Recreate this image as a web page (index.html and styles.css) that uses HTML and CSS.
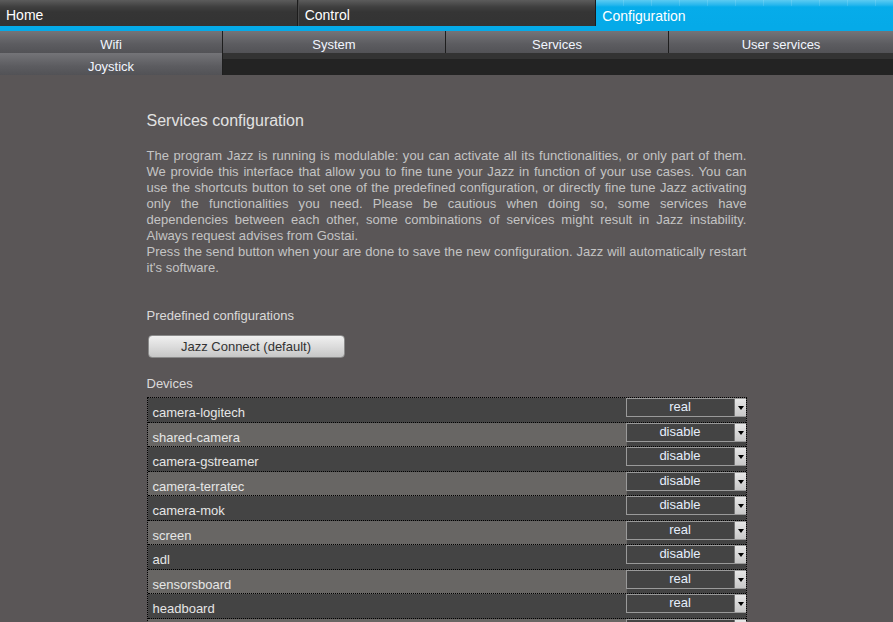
FILE: index.html
```html
<!DOCTYPE html>
<html>
<head>
<meta charset="utf-8">
<link rel="stylesheet" href="styles.css">
</head>
<body>
<div class="topnav">
  <div class="tab">Home</div>
  <div class="tab">Control</div>
  <div class="tab active">Configuration</div>
</div>
<div class="subnav">
  <div class="subrow">
    <div class="stab">Wifi</div>
    <div class="stab">System</div>
    <div class="stab">Services</div>
    <div class="stab">User services</div>
  </div>
  <div class="subrow second">
    <div class="stab">Joystick</div>
  </div>
</div>
<div class="content">
  <h1 class="title">Services configuration</h1>
  <p class="intro">The program Jazz is running is modulable: you can activate all its functionalities, or only part of them. We provide this interface that allow you to fine tune your Jazz in function of your use cases. You can use the shortcuts button to set one of the predefined configuration, or directly fine tune Jazz activating only the functionalities you need. Please be cautious when doing so, some services have dependencies between each other, some combinations of services might result in Jazz instability. Always request advises from Gostai.<br>Press the send button when your are done to save the new configuration. Jazz will automatically restart it's software.</p>
  <div class="label predef">Predefined configurations</div>
  <button class="btn">Jazz Connect (default)</button>
  <div class="label devices">Devices</div>
  <div class="table">
    <div class="row"><span class="name">camera-logitech</span><div class="sel"><span class="val">real</span><span class="arrow"></span></div></div>
    <div class="row light"><span class="name">shared-camera</span><div class="sel"><span class="val">disable</span><span class="arrow"></span></div></div>
    <div class="row"><span class="name">camera-gstreamer</span><div class="sel"><span class="val">disable</span><span class="arrow"></span></div></div>
    <div class="row light"><span class="name">camera-terratec</span><div class="sel"><span class="val">disable</span><span class="arrow"></span></div></div>
    <div class="row"><span class="name">camera-mok</span><div class="sel"><span class="val">disable</span><span class="arrow"></span></div></div>
    <div class="row light"><span class="name">screen</span><div class="sel"><span class="val">real</span><span class="arrow"></span></div></div>
    <div class="row"><span class="name">adl</span><div class="sel"><span class="val">disable</span><span class="arrow"></span></div></div>
    <div class="row light"><span class="name">sensorsboard</span><div class="sel"><span class="val">real</span><span class="arrow"></span></div></div>
    <div class="row"><span class="name">headboard</span><div class="sel"><span class="val">real</span><span class="arrow"></span></div></div>
    <div class="row light"><span class="name">motorboard</span><div class="sel"><span class="val">real</span><span class="arrow"></span></div></div>
  </div>
</div>
</body>
</html>
```
FILE: styles.css
```css
html, body {
  margin: 0;
  padding: 0;
  background: #5a5657;
  font-family: "Liberation Sans", Arial, sans-serif;
}
.topnav {
  display: flex;
  height: 26px;
  border-bottom: 5px solid #05aae8;
}
.tab {
  flex: 1;
  height: 26px;
  line-height: 31px;
  font-size: 14px;
  color: #fff;
  padding-left: 6px;
  box-sizing: border-box;
  background: linear-gradient(#5c5c5c 0px, #3f3f3f 7px, #353535 12px, #333 26px);
  border-right: 1px solid #1c1c1c;
  border-left: 1px solid #4a4a4a;
}
.tab:first-child { border-left: none; }
.tab.active {
  background:
    repeating-linear-gradient(90deg, transparent 0 27px, rgba(255,255,255,0.12) 27px 28px) top / 100% 6px no-repeat,
    linear-gradient(#5ccbf2 0px, #26b6ed 5px, #06acea 7px, #05aae8 26px);
  border: none;
  line-height: 33px;
}
.subnav {
  background: linear-gradient(#333 0 28px, #232323 28px);
}
.subrow {
  display: flex;
  height: 22px;
}
.stab {
  width: 223px;
  height: 22px;
  line-height: 27px;
  text-align: center;
  font-size: 13px;
  color: #f2f6ff;
  background: linear-gradient(#747478, #5c5c60 60%, #525256);
  border-right: 1px solid #1e1e1e;
  box-sizing: border-box;
}
.stab:last-child { flex: 1; border-right: none; }
.subrow.second .stab { width: 223px; flex: none; border-right: 1px solid #1e1e1e; }
.content {
  width: 600px;
  margin: 0 auto;
  padding-top: 36px;
  color: #c9c9c9;
}
.title {
  margin: 0;
  font-weight: normal;
  font-size: 16px;
  line-height: 19px;
  color: #e2e2e2;
}
.intro {
  margin: 18px 0 0;
  font-size: 13px;
  letter-spacing: 0.04px;
  line-height: 16px;
  text-align: justify;
  color: #c4c4c4;
}
.label {
  font-size: 13px;
  line-height: 16px;
  color: #dadada;
}
.predef { margin-top: 32px; }
.btn {
  display: block;
  margin: 11px 0 0 1px;
  width: 197px;
  height: 23px;
  border: 1px solid #8a8a8a;
  border-radius: 4px;
  background: linear-gradient(#f0f0f0, #dcdcdc 50%, #c6c6c6);
  font-family: "Liberation Sans", Arial, sans-serif;
  font-size: 13px;
  color: #333;
  padding: 0;
}
.devices { margin-top: 18px; }
.table {
  margin-top: 5px;
  border-top: 1px dotted #000;
  border-left: 1px dotted #000;
  border-right: 1px dotted #000;
}
.row {
  display: flex;
  justify-content: space-between;
  height: 24.5px;
  box-sizing: border-box;
  border-bottom: 1px dotted #000;
  background: #444;
}
.row.light {
  background: linear-gradient(90deg, #686664 0, #686664 479px, #444 479px);
}
.name {
  padding: 7px 0 0 5px;
  font-size: 13px;
  line-height: 16px;
  color: #e6e6e6;
}
.sel {
  display: flex;
  width: 120px;
  height: 19px;
  margin-top: 0px;
  box-sizing: border-box;
  border: 1px solid #9a9a9a;
  border-right: none;
  background: #444;
}
.val {
  flex: 1;
  text-align: center;
  font-size: 13px;
  line-height: 16px;
  color: #e6eefc;
}
.arrow {
  width: 12px;
  height: 17px;
  box-sizing: border-box;
  background: linear-gradient(#e6e6e6, #c8c8c8);
  border-left: 1px solid #777;
  position: relative;
}
.arrow::after {
  content: "";
  position: absolute;
  left: 3px;
  top: 7px;
  border-left: 3px solid transparent;
  border-right: 3px solid transparent;
  border-top: 4px solid #000;
}
```
